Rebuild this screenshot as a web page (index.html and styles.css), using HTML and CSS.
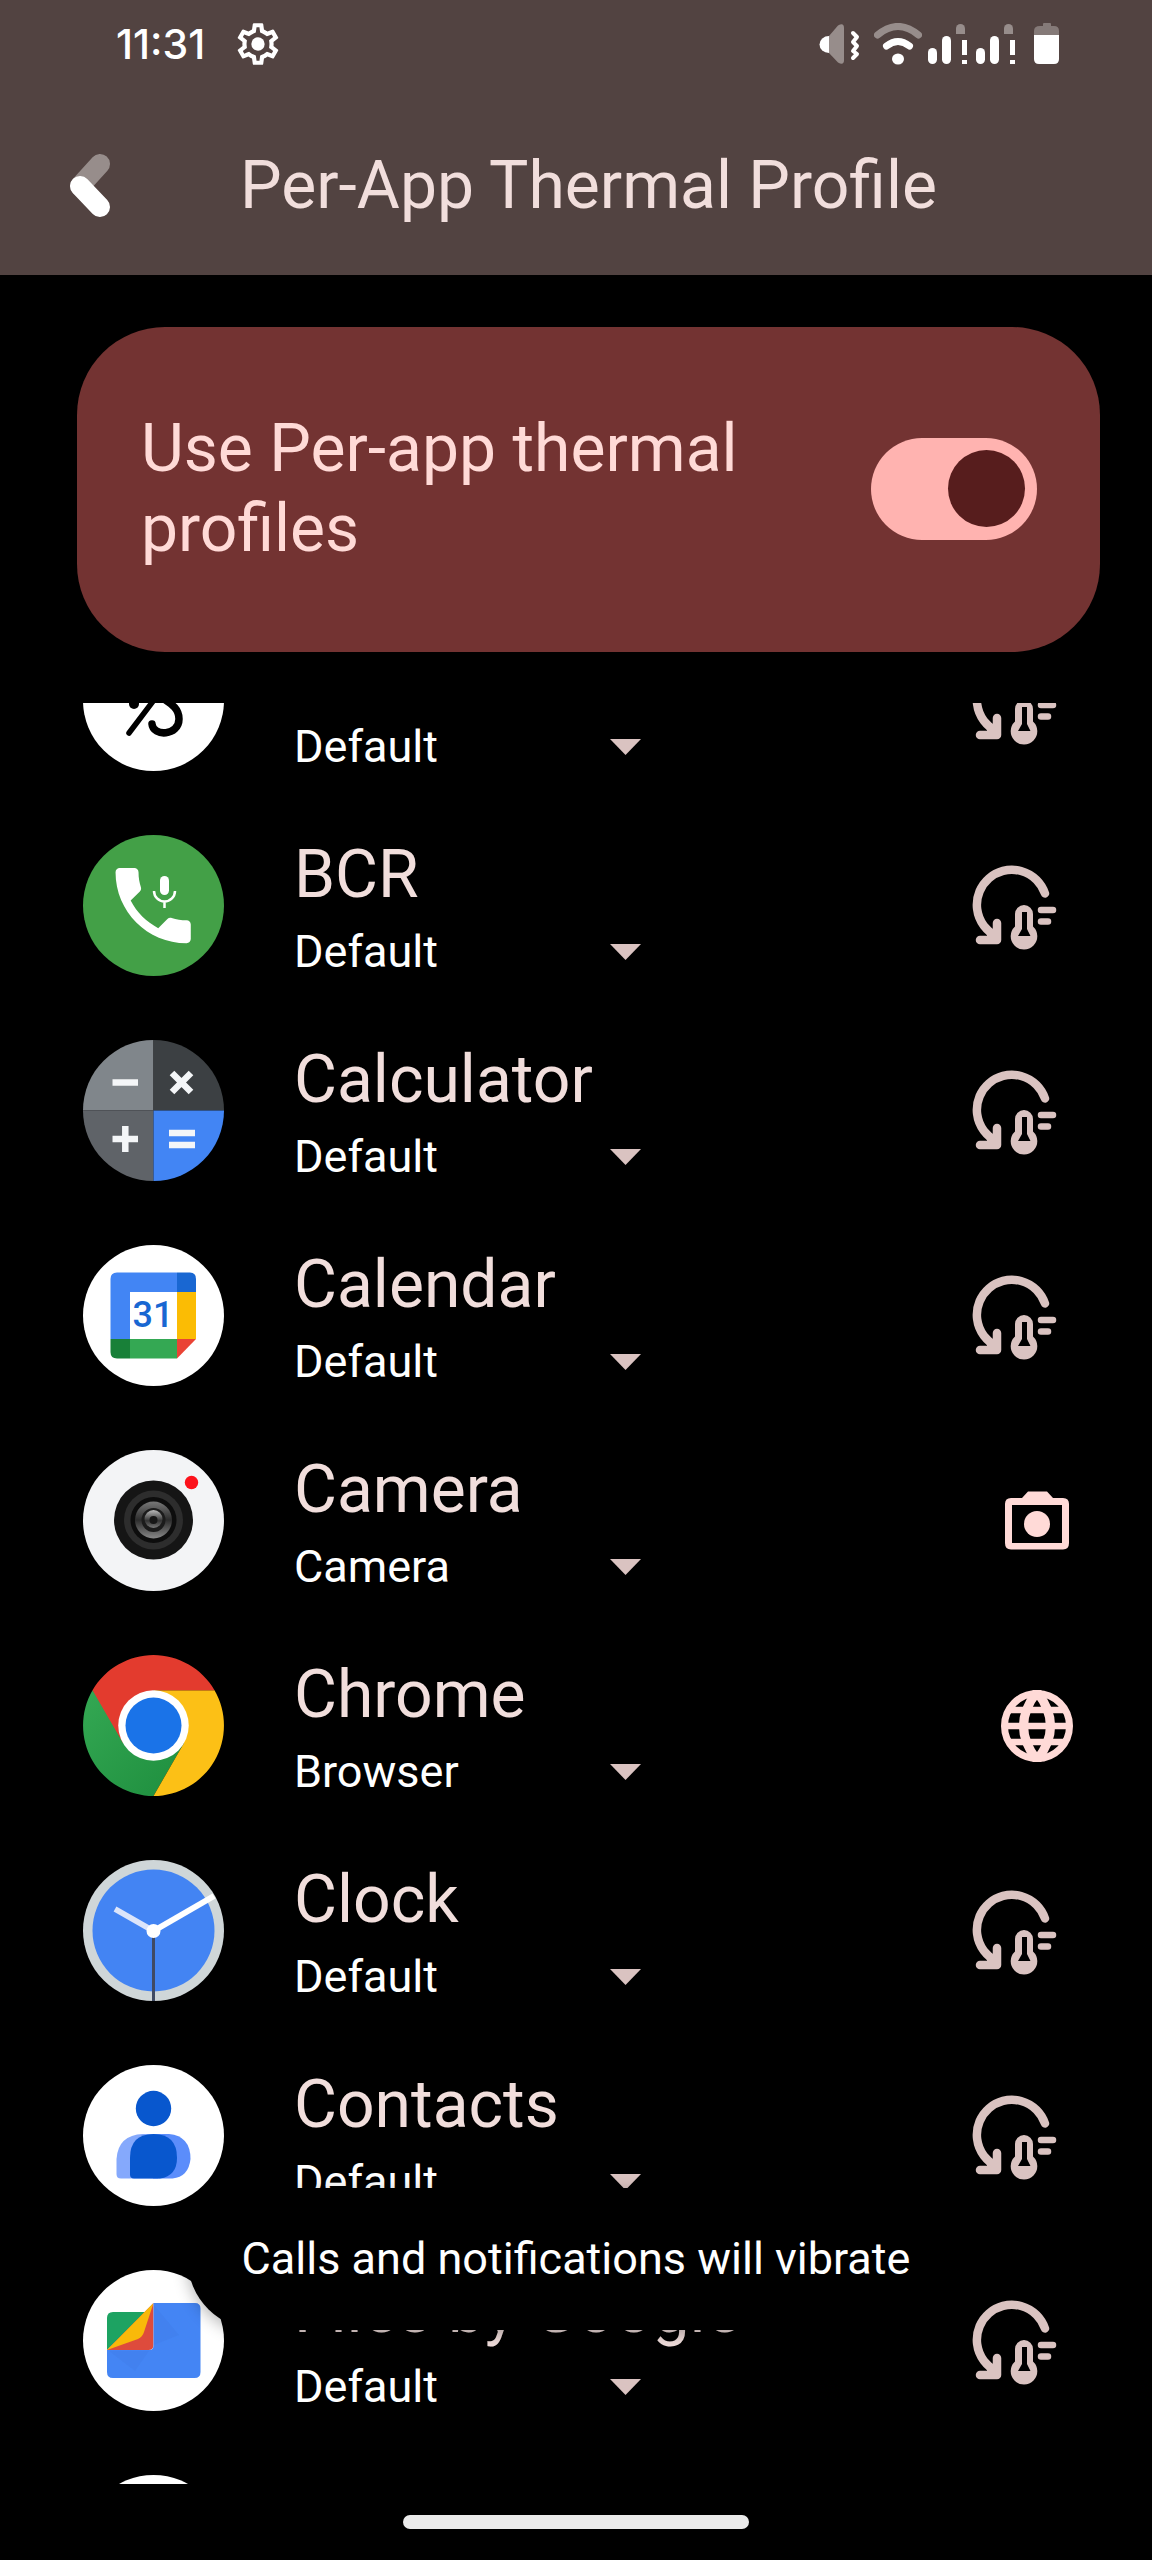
FILE: index.html
```html
<!DOCTYPE html>
<html lang="en">
<head>
    <meta charset="UTF-8">
    <meta name="viewport" content="width=device-width, initial-scale=1.0">
    <title>Per-App Thermal Profile</title>
    <link rel="stylesheet" href="styles.css">
</head>
<body>
    <svg class="defs" aria-hidden="true">
        <symbol id="thermal" viewBox="0 0 102 88">
            <g fill="none" stroke="currentColor" stroke-width="8.500" stroke-linecap="round" stroke-linejoin="round">
                <path d="M74 31.500A35 35 0 1 0 25 74"/>
                <path d="M9 78H26V61M20 72L26 78"/>
                <path d="M70 48H82M70 59.500H77" stroke-width="6.500"/>
            </g>
            <path fill="currentColor" fill-rule="evenodd" d="M44 52a9 9 0 0 1 18 0V64.500A13.300 13.300 0 1 1 44 64.500zM51 50V67L47 74H59.500L56 67V50z"/>
        </symbol>
        <symbol id="signal" viewBox="0 0 42 42">
            <rect x="0" y="25" width="9" height="16" rx="4.500" fill="#fff"/>
            <rect x="14" y="13" width="9" height="28" rx="4.500" fill="#fff"/>
            <path d="M28 11V5.500a4.500 4.500 0 0 1 9 0V11z" fill="#978d8b"/>
            <path d="M34 17h5v15h-5zM34 37h5v4h-5z" fill="#fff"/>
        </symbol>
        <symbol id="arrow" viewBox="0 0 31 16">
            <path d="M0 0H31L15.500 16z" fill="currentColor"/>
        </symbol>
    </svg>

    <div id="phone">
        <header>
            <div class="status">
                <span class="clock">11:31</span>
                <svg class="gear" viewBox="0 0 24 24" aria-hidden="true">
                    <path fill="#fff" d="M19.430 12.980c.040-.320.070-.640.070-.980 0-.340-.030-.660-.070-.980l2.110-1.650c.190-.150.240-.420.120-.640l-2-3.460c-.090-.160-.260-.250-.440-.250-.060 0-.120.010-.170.030l-2.490 1c-.520-.400-1.080-.730-1.690-.980l-.380-2.650C14.460 2.180 14.250 2 14 2h-4c-.250 0-.460.180-.490.420l-.380 2.650c-.610.250-1.170.590-1.690.980l-2.490-1c-.060-.020-.120-.030-.180-.030-.170 0-.340.090-.430.250l-2 3.460c-.130.220-.070.490.120.640l2.110 1.650c-.040.320-.070.650-.070.980 0 .330.030.660.070.980l-2.110 1.650c-.190.150-.240.420-.120.640l2 3.460c.090.160.260.250.440.250.060 0 .120-.010.170-.030l2.490-1c.520.400 1.080.730 1.690.980l.380 2.650c.030.240.240.420.490.420h4c.250 0 .460-.180.490-.420l.380-2.650c.610-.250 1.170-.590 1.690-.980l2.490 1c.060.020.120.030.180.030.170 0 .340-.090.430-.250l2-3.460c.120-.220.070-.490-.120-.640l-2.110-1.650zm-1.980-1.710c.040.310.050.520.050.730 0 .210-.020.430-.050.730l-.140 1.130.890.700 1.080.840-.700 1.210-1.270-.510-1.040-.420-.900.680c-.430.320-.840.560-1.250.730l-1.060.430-.160 1.130-.200 1.350h-1.400l-.190-1.350-.160-1.130-1.060-.430c-.430-.180-.830-.410-1.230-.710l-.910-.700-1.060.430-1.270.510-.700-1.210 1.080-.840.890-.700-.140-1.130c-.030-.310-.050-.540-.050-.740s.020-.430.050-.730l.140-1.130-.890-.700-1.080-.840.700-1.210 1.270.510 1.040.420.900-.680c.430-.320.840-.560 1.250-.730l1.060-.430.160-1.130.200-1.350h1.390l.190 1.350.160 1.130 1.060.430c.430.180.830.410 1.230.710l.910.700 1.060-.430 1.270-.510.700 1.210-1.070.850-.890.700.140 1.130z"/>
                    <circle cx="12" cy="12" r="3.200" fill="#fff"/>
                </svg>
                <div class="tray">
                    <svg width="49" height="42" viewBox="0 0 49 42" aria-hidden="true">
                        <path d="M10 13a9.500 8.500 0 0 0 0 17z" fill="#fff"/>
                        <path d="M10 13L19 2.500Q25 -1 25 5V37Q25 43 19 39.500L10 30z" fill="#978d8b"/>
                        <path d="M34 10l4 4-4 5 4 4-4 5 4 3-4 4" fill="none" stroke="#fff" stroke-width="4" stroke-linecap="round" stroke-linejoin="round"/>
                    </svg>
                    <svg width="48" height="42" viewBox="0 0 48 42" aria-hidden="true">
                        <path d="M3.500 12Q24 -5 44.500 12" fill="none" stroke="#978d8b" stroke-width="7" stroke-linecap="round"/>
                        <path d="M12.500 23Q24 14 35.500 23" fill="none" stroke="#fff" stroke-width="7" stroke-linecap="round"/>
                        <ellipse cx="24" cy="36" rx="6" ry="5.500" fill="#fff"/>
                    </svg>
                    <svg width="42" height="42" aria-hidden="true"><use href="#signal"/></svg>
                    <svg width="42" height="42" aria-hidden="true"><use href="#signal"/></svg>
                    <svg width="36" height="42" viewBox="0 0 36 42" aria-hidden="true">
                        <path d="M10 12V8q0-5 6-5h3V1q0-1 1-1h6q1 0 1 1v2h3q5 0 5 5v4z" fill="#857a78"/>
                        <path d="M10 12H35V36q0 5-5 5H15q-5 0-5-5z" fill="#fff"/>
                    </svg>
                </div>
            </div>
            <div class="bar">
                <button class="back" aria-label="Back">
                    <svg viewBox="0 0 42 66" aria-hidden="true">
                        <path d="M31 11L11 33" stroke="#978d8b" stroke-width="20" stroke-linecap="round"/>
                        <path d="M11 33L31 54" stroke="#fff" stroke-width="20" stroke-linecap="round"/>
                    </svg>
                </button>
                <h1>Per-App Thermal Profile</h1>
            </div>
        </header>

        <label class="master">
            <span>Use Per-app thermal profiles</span>
            <input type="checkbox" role="switch" checked>
        </label>

        <main class="list">
            <ul class="apps">
                <li class="app">
                    <svg class="icon" viewBox="0 0 141 141" aria-hidden="true">
                        <circle cx="70.500" cy="70.500" r="70.500" fill="#fff"/>
                        <circle cx="51" cy="74" r="5"/>
                        <path d="M74 66L46 103" fill="none" stroke="#000" stroke-width="5.500" stroke-linecap="round"/>
                        <path d="M74 64C84 72 96 76 96 89C96 106 70 107 69 94" fill="none" stroke="#000" stroke-width="7.500" stroke-linecap="round"/>
                    </svg>
                    <div class="info">
                        <h2>&nbsp;</h2>
                        <div class="spinner">
                            <select aria-label="Profile"><option>Default</option><option>Browser</option><option>Camera</option></select>
                            <svg aria-hidden="true"><use href="#arrow"/></svg>
                        </div>
                    </div>
                    <svg class="thermal" aria-hidden="true"><use href="#thermal"/></svg>
                </li>
                <li class="app">
                    <svg class="icon" viewBox="0 0 141 141" aria-hidden="true">
                        <circle cx="70.500" cy="70.500" r="70.500" fill="#43a047"/>
                        <path transform="translate(20 20.500) scale(4.180)" fill="#fff" d="M6.620 10.790c1.440 2.830 3.760 5.140 6.590 6.590l2.200-2.200c.270-.270.670-.360 1.020-.240 1.120.370 2.330.570 3.570.570.550 0 1 .450 1 1V20c0 .550-.450 1-1 1-9.390 0-17-7.610-17-17 0-.550.450-1 1-1h3.500c.550 0 1 .450 1 1 0 1.250.200 2.450.570 3.570.110.350.030.740-.250 1.020l-2.200 2.200z"/>
                        <rect x="77" y="41" width="9" height="19" rx="4.500" fill="#fff"/>
                        <path d="M71 56a10.500 10.500 0 0 0 21 0M81.500 66V73" fill="none" stroke="#fff" stroke-width="2.500"/>
                    </svg>
                    <div class="info">
                        <h2>BCR</h2>
                        <div class="spinner">
                            <select aria-label="BCR profile"><option>Default</option><option>Browser</option><option>Camera</option></select>
                            <svg aria-hidden="true"><use href="#arrow"/></svg>
                        </div>
                    </div>
                    <svg class="thermal" aria-hidden="true"><use href="#thermal"/></svg>
                </li>
                <li class="app">
                    <svg class="icon" viewBox="0 0 141 141" aria-hidden="true">
                        <path d="M70.500 70.500H0A70.500 70.500 0 0 1 70.500 0z" fill="#80868b"/>
                        <path d="M70.500 70.500V0A70.500 70.500 0 0 1 141 70.500z" fill="#3c4043"/>
                        <path d="M70.500 70.500V141A70.500 70.500 0 0 1 0 70.500z" fill="#5f6368"/>
                        <path d="M70.500 70.500H141A70.500 70.500 0 0 1 70.500 141z" fill="#4285f4"/>
                        <path d="M29.500 42.500H55M89 33l19 19M108 33L89 52M29.500 99H55M42.300 86V112M86 93H112M86 105H112" stroke="#f4f6f8" stroke-width="6.500"/>
                    </svg>
                    <div class="info">
                        <h2>Calculator</h2>
                        <div class="spinner">
                            <select aria-label="Calculator profile"><option>Default</option><option>Browser</option><option>Camera</option></select>
                            <svg aria-hidden="true"><use href="#arrow"/></svg>
                        </div>
                    </div>
                    <svg class="thermal" aria-hidden="true"><use href="#thermal"/></svg>
                </li>
                <li class="app">
                    <svg class="icon" viewBox="0 0 141 141" aria-hidden="true">
                        <circle cx="70.500" cy="70.500" r="70.500" fill="#fff"/>
                        <path d="M27.500 94V34q0-6.500 6.500-6.500H94V47H47V94z" fill="#4285f4"/>
                        <path d="M94 27.500H107q6 0 6 6.500V47H94z" fill="#1967d2"/>
                        <path d="M94 47H113V94H94z" fill="#fbbc04"/>
                        <path d="M47 94H94V113.500H47z" fill="#34a853"/>
                        <path d="M27.500 94H47V113.500H34q-6.500 0-6.500-6.500z" fill="#188038"/>
                        <path d="M94 94H113L94 113.500z" fill="#ea4335"/>
                        <text class="day" x="70" y="82" text-anchor="middle">31</text>
                    </svg>
                    <div class="info">
                        <h2>Calendar</h2>
                        <div class="spinner">
                            <select aria-label="Calendar profile"><option>Default</option><option>Browser</option><option>Camera</option></select>
                            <svg aria-hidden="true"><use href="#arrow"/></svg>
                        </div>
                    </div>
                    <svg class="thermal" aria-hidden="true"><use href="#thermal"/></svg>
                </li>
                <li class="app">
                    <svg class="icon" viewBox="0 0 141 141" aria-hidden="true">
                        <linearGradient id="lens" x1="0" y1="0" x2="0" y2="1">
                            <stop offset="0" stop-color="#777"/>
                            <stop offset=".5" stop-color="#2c2c2c"/>
                            <stop offset="1" stop-color="#888"/>
                        </linearGradient>
                        <linearGradient id="glass" x1="0" y1="0" x2="0" y2="1">
                            <stop offset="0" stop-color="#bbb"/>
                            <stop offset=".6" stop-color="#333"/>
                            <stop offset="1" stop-color="#777"/>
                        </linearGradient>
                        <circle cx="70.500" cy="70.500" r="70.500" fill="#f3f4f6"/>
                        <circle cx="70.500" cy="70" r="39.500" fill="#151515"/>
                        <circle cx="70.500" cy="70" r="29.500" fill="#2d2d2d"/>
                        <circle cx="70.500" cy="70" r="23" fill="#0d0d0d"/>
                        <circle cx="70.500" cy="70" r="18.500" fill="url(#lens)"/>
                        <circle cx="70.500" cy="70" r="12" fill="#1b1b1b"/>
                        <circle cx="70.500" cy="69" r="9" fill="url(#glass)"/>
                        <circle cx="70.500" cy="70" r="4" fill="#161616"/>
                        <circle cx="108.500" cy="32.500" r="6.700" fill="#fc121b"/>
                    </svg>
                    <div class="info">
                        <h2>Camera</h2>
                        <div class="spinner">
                            <select aria-label="Camera profile"><option>Default</option><option>Browser</option><option selected>Camera</option></select>
                            <svg aria-hidden="true"><use href="#arrow"/></svg>
                        </div>
                    </div>
                    <svg class="profile" viewBox="0 0 72 72" aria-hidden="true">
                        <path fill="currentColor" fill-rule="evenodd" d="M10 13H21L27 6.500H46L52 13H62q6 0 6 6V58q0 6.500-6 6.500H10q-6 0-6-6.500V19q0-6 6-6zM11 20V58H61V20z"/>
                        <circle cx="36" cy="39" r="13" fill="currentColor"/>
                    </svg>
                </li>
                <li class="app">
                    <svg class="icon" viewBox="0 0 141 141" aria-hidden="true">
                        <linearGradient id="green" x1="0" y1="0" x2="1" y2="1">
                            <stop offset="0" stop-color="#34a853"/>
                            <stop offset="1" stop-color="#1e8e3e"/>
                        </linearGradient>
                        <path d="M9.500 35.250A70.500 70.500 0 0 0 70.500 141L101 88V70H40z" fill="url(#green)"/>
                        <path d="M70.500 35.250H131.500A70.500 70.500 0 0 1 70.500 141L101 88z" fill="#fcc016"/>
                        <path d="M9.500 35.250A70.500 70.500 0 0 1 131.500 35.250H70.500L40 88z" fill="#e33b2e"/>
                        <circle cx="70.500" cy="70.500" r="35.250" fill="#fff"/>
                        <circle cx="70.500" cy="70.500" r="28" fill="#1a73e8"/>
                    </svg>
                    <div class="info">
                        <h2>Chrome</h2>
                        <div class="spinner">
                            <select aria-label="Chrome profile"><option>Default</option><option selected>Browser</option><option>Camera</option></select>
                            <svg aria-hidden="true"><use href="#arrow"/></svg>
                        </div>
                    </div>
                    <svg class="profile" viewBox="0 0 72 72" aria-hidden="true">
                        <g fill="none" stroke="currentColor" stroke-width="7">
                            <circle cx="36" cy="36" r="32.500"/>
                            <path d="M36 2Q9 36 36 70Q63 36 36 2z" stroke-width="9"/>
                            <path d="M4 36H68M9 20H63M9 52H63" stroke-width="6.500"/>
                        </g>
                    </svg>
                </li>
                <li class="app">
                    <svg class="icon" viewBox="0 0 141 141" aria-hidden="true">
                        <circle cx="70.500" cy="70.500" r="70.500" fill="#cfd6d8"/>
                        <circle cx="70.500" cy="70.500" r="61" fill="#4384f3"/>
                        <path d="M70.500 71L32 49" stroke="#dce5fa" stroke-width="5.500"/>
                        <path d="M70.500 71L131 36" stroke="#fff" stroke-width="6"/>
                        <path d="M70.500 71V141" stroke="#404a63" stroke-width="3"/>
                        <circle cx="70.500" cy="71" r="7" fill="#fff"/>
                    </svg>
                    <div class="info">
                        <h2>Clock</h2>
                        <div class="spinner">
                            <select aria-label="Clock profile"><option>Default</option><option>Browser</option><option>Camera</option></select>
                            <svg aria-hidden="true"><use href="#arrow"/></svg>
                        </div>
                    </div>
                    <svg class="thermal" aria-hidden="true"><use href="#thermal"/></svg>
                </li>
                <li class="app">
                    <svg class="icon" viewBox="0 0 141 141" aria-hidden="true">
                        <circle cx="70.500" cy="70.500" r="70.500" fill="#fff"/>
                        <path d="M33.500 94Q35 70 60 69H75V113.500H38q-4.500 0-4.500-4.500z" fill="#85a9fc"/>
                        <path d="M70 69H86q21.500 2 21.500 25q-2 18-18 19.500H70z" fill="#5b8dfb"/>
                        <path d="M47 93q0-24 23.500-24T94 93q0 18-17 20.500H51q-4 0-4-4z" fill="#0857ce"/>
                        <circle cx="70.500" cy="43.500" r="17.700" fill="#0857ce"/>
                    </svg>
                    <div class="info">
                        <h2>Contacts</h2>
                        <div class="spinner">
                            <select aria-label="Contacts profile"><option>Default</option><option>Browser</option><option>Camera</option></select>
                            <svg aria-hidden="true"><use href="#arrow"/></svg>
                        </div>
                    </div>
                    <svg class="thermal" aria-hidden="true"><use href="#thermal"/></svg>
                </li>
                <li class="app">
                    <svg class="icon" viewBox="0 0 141 141" aria-hidden="true">
                        <circle cx="70.500" cy="70.500" r="70.500" fill="#fff"/>
                        <path d="M24 80V48q0-6 6-6H64z" fill="#1da362"/>
                        <path d="M70.500 33V75q0 5-5 5H24z" fill="#de4b3c"/>
                        <path d="M70.500 33L61 62Q59.500 67 55 69L24 80z" fill="#f9b909"/>
                        <path d="M70.500 33H112q5.500 0 5.500 5.500V102q0 6-6 6H30q-6 0-6-6V80H66q4.500 0 4.500-4.500z" fill="#4485f4"/>
                        <path d="M71 35l25 30-25 10zM26 81H66l-14 20z" fill="#2f66c9" opacity=".1"/>
                    </svg>
                    <div class="info">
                        <h2>Files by Google</h2>
                        <div class="spinner">
                            <select aria-label="Files by Google profile"><option>Default</option><option>Browser</option><option>Camera</option></select>
                            <svg aria-hidden="true"><use href="#arrow"/></svg>
                        </div>
                    </div>
                    <svg class="thermal" aria-hidden="true"><use href="#thermal"/></svg>
                </li>
                <li class="app">
                    <svg class="icon" viewBox="0 0 141 141" aria-hidden="true">
                        <circle cx="70.500" cy="70.500" r="70.500" fill="#fff"/>
                    </svg>
                </li>
            </ul>
        </main>

        <footer class="nav"><div class="pill"></div></footer>

        <div class="toast" role="status">Calls and notifications will vibrate</div>
    </div>
</body>
</html>
```
FILE: styles.css
```css
*{margin: 0px;padding: 0px;box-sizing: border-box;}
body{
    background-color: black;
    color: white;
    font-family: Roboto, sans-serif;
}
.defs{
    display: none;
}
#phone{
    position: relative;
    height: 100vh;
    display: flex;
    flex-direction: column;
    overflow: hidden;
}
header{
    background-color: #524341;
}
.status{
    height: 87px;
    padding: 0 92px 0 116px;
    display: flex;
    align-items: center;
}
.clock{
    font: 500 41px Inter, sans-serif;
}
.gear{
    width: 50px;
    height: 50px;
    margin-left: 28px;
}
.tray{
    margin-left: auto;
    display: flex;
    gap: 6px;
}
.bar{
    height: 188px;
    padding: 10px 69px 0;
    display: flex;
    align-items: center;
    gap: 129px;
}
.back{
    width: 42px;
    height: 66px;
    border: none;
    background: none;
}
.back svg{
    display: block;
}
h1, h2{
    font-size: 66px;
    font-weight: 400;
    line-height: 76px;
    color: #f1dedc;
}
.master{
    margin: 52px 52px 51px 77px;
    padding: 82px 63px 83px 64px;
    border-radius: 88px;
    background-color: #733332;
    color: #ffdad7;
    font-size: 66px;
    line-height: 80px;
    display: flex;
    align-items: center;
    justify-content: space-between;
    gap: 80px;
}
.master input{
    appearance: none;
    flex: none;
    width: 166px;
    height: 102px;
    padding: 12px;
    border-radius: 51px;
    background-color: #ffb3b0;
    display: flex;
    justify-content: flex-end;
}
.master input::before{
    content: "";
    width: 77px;
    height: 77px;
    border-radius: 50%;
    background-color: #571d1d;
}
.master input:not(:checked){
    justify-content: flex-start;
}
.list{
    flex: 1;
    min-height: 0;
    overflow: hidden;
}
/* scrolled halfway into the first app */
.apps{
    list-style: none;
    margin-top: -105px;
}
.app{
    height: 205px;
    padding: 0 79px 0 83px;
    display: flex;
    align-items: center;
}
.icon{
    flex: none;
    width: 141px;
    height: 141px;
}
.day{
    font: 500 36px Roboto, sans-serif;
    fill: #1967d2;
}
.info{
    flex: 1;
    padding: 6px 0 0 70px;
}
.spinner{
    width: 347px;
    margin-top: 11px;
    display: grid;
    align-items: center;
    color: #dac3c1;
}
.spinner select, .spinner svg{
    grid-area: 1 / 1;
}
.spinner select{
    appearance: none;
    border: none;
    background: none;
    color: white;
    font: 45px Roboto, sans-serif;
    line-height: 56px;
    height: 56px;
}
.spinner svg{
    justify-self: end;
    width: 31px;
    height: 16px;
    pointer-events: none;
}
.thermal{
    width: 102px;
    height: 88px;
    color: #dac3c1;
}
.profile{
    width: 72px;
    height: 72px;
    color: #ffdad7;
}
.nav{
    height: 76px;
    padding-top: 31px;
}
.pill{
    width: 30%;
    height: 14px;
    margin: 0 auto;
    border-radius: 7px;
    background-color: #ebebeb;
}
.toast{
    position: absolute;
    bottom: 230px;
    left: 50%;
    transform: translateX(-50%);
    padding: 43px 54px;
    border-radius: 71px;
    background-color: black;
    box-shadow: 0 4px 16px rgba(0, 0, 0, 0.3);
    font-size: 45px;
    line-height: 56px;
    white-space: nowrap;
}
```
